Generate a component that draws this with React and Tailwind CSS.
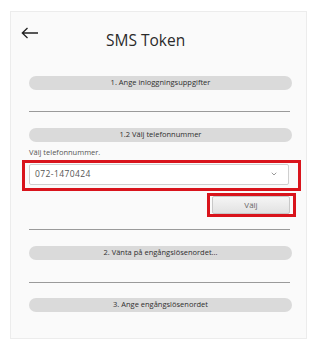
import { ChevronDown } from 'lucide-react'

function Steg({ text }) {
  return (
    <div className="h-[14px] w-[263px] rounded-full bg-[#dadada] flex items-center justify-center text-[7.5px] text-[#2e2e2e] leading-none">
      {text}
    </div>
  )
}

function Linje() {
  return <div className="h-px w-[261px] bg-[#9a9a9a]" />
}

export default function App() {
  return (
    <div className="w-[323px] h-[344px] bg-white pt-[11px] pl-[10px]" style={{ fontFamily: '"Open Sans", Lato, sans-serif' }}>
      <div className="w-[297px] h-[328px] bg-[#fafafa] border border-[#ececec] pl-[18px] pr-[14px]">
        <div className="flex h-[64px]">
          <svg className="mt-[15px] -ml-[8px] w-[17px] h-[12px] text-[#222]" viewBox="0 0 17 12" fill="none" stroke="currentColor" strokeWidth="1.3">
            <path d="M17 6H1.5M6.5 1L1.3 6l5.2 5" />
          </svg>
          <h1 className="ml-[68px] mt-[21px] text-[15.5px] leading-none text-[#2a2a2a]">SMS Token</h1>
        </div>

        <Steg text="1. Ange inloggningsuppgifter" />
        <div className="mt-[21px]"><Linje /></div>
        <div className="mt-[16px]"><Steg text="1.2 Välj telefonnummer" /></div>

        <div className="mt-[7px] text-[7.5px] leading-none text-[#555]">Välj telefonnummer.</div>

        <div className="mt-[3px] -ml-[7px] w-[279px] h-[31px] border-[3px] border-[#d9141c] pt-[1px] pl-[4px]">
          <div className="w-[260px] h-[21px] bg-white border border-[#cfcfcf] rounded-[2px] flex items-center pl-[5px] pr-[10px]">
            <span className="text-[8.5px] tracking-[0.4px] text-[#555] flex-1">072-1470424</span>
            <ChevronDown className="w-[8px] h-[8px] text-[#666]" strokeWidth={2} />
          </div>
        </div>

        <div className="mt-[2px] ml-[178px] w-[89px] h-[24px] border-[3px] border-[#d9141c] pl-[2px]">
          <div className="w-[78px] h-[18px] bg-gradient-to-b from-[#f5f5f5] to-[#e2e2e2] border border-[#c8c8c8] rounded-[2px] flex items-center justify-center text-[8px] text-[#666]">
            Välj
          </div>
        </div>

        <div className="mt-[12px]"><Linje /></div>
        <div className="mt-[16px]"><Steg text="2. Vänta på engångslösenordet..." /></div>
        <div className="mt-[22px]"><Linje /></div>
        <div className="mt-[15px]"><Steg text="3. Ange engångslösenordet" /></div>
      </div>
    </div>
  )
}
